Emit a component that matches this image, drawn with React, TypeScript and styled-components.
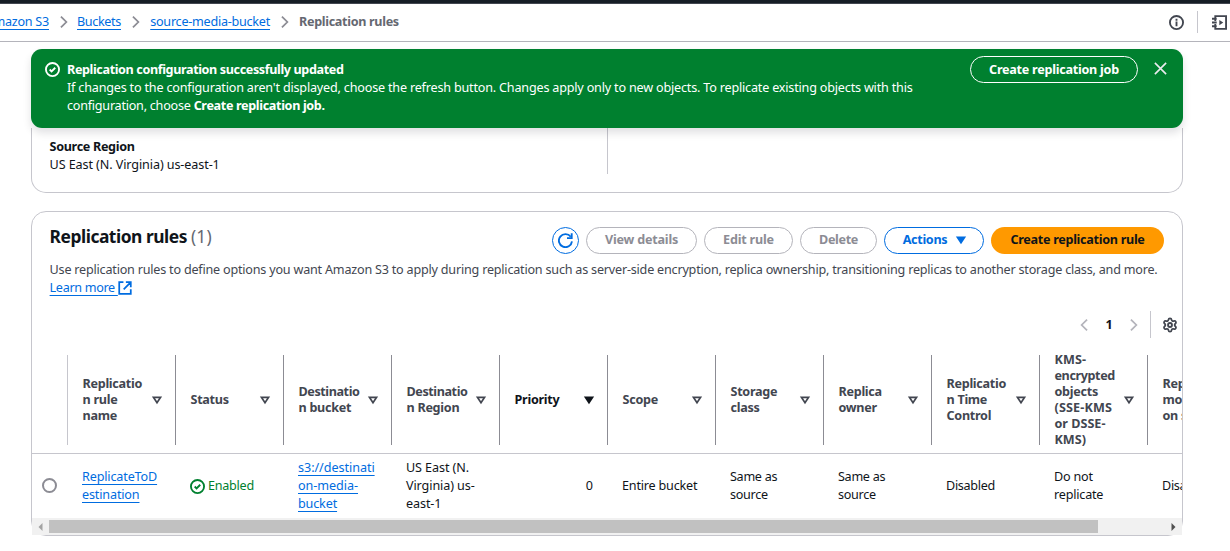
import React from "react";
import styled, { createGlobalStyle, css } from "styled-components";
import { Settings } from "lucide-react";

const Global = createGlobalStyle`
  * { box-sizing: border-box; }
  html, body { margin: 0; padding: 0; background: #fff; overflow: hidden; }
  body {
    font-family: "Noto Sans", "Open Sans", sans-serif;
    font-size: 12.6px;
    line-height: 18px;
    color: #0f141a;
  }
`;

const Page = styled.div`
  width: 1230px;
  height: 551px;
  display: flex;
  flex-direction: column;
  overflow: hidden;
`;

const TopStrip = styled.div`
  flex: none;
  height: 4px;
  background: #161d26;
  border-bottom: 1px solid #424650;
`;

const NavBar = styled.header`
  flex: none;
  height: 38px;
  display: flex;
  align-items: center;
  justify-content: space-between;
  border-bottom: 1px solid #b4b4bb;
`;

const Crumbs = styled.nav`
  display: flex;
  align-items: center;
  margin-left: -13px;
  padding-bottom: 1px;
`;

const Track = styled.span<{ $ls?: number }>`
  letter-spacing: ${(p) => p.$ls ?? -0.2}px;
  white-space: nowrap;
`;

const Link = styled.a<{ $ls?: number }>`
  color: #006ce0;
  white-space: pre;
  letter-spacing: ${(p) => p.$ls ?? -0.15}px;
  text-decoration: underline;
  text-decoration-thickness: 1px;
  text-underline-offset: 3px;
  text-decoration-skip-ink: none;
`;

const CrumbItem = styled.span<{ $w: number }>`
  width: ${(p) => p.$w}px;
  display: flex;
  align-items: center;
  justify-content: flex-end;
`;

const CrumbGap = styled.span`
  width: 29px;
  display: flex;
  justify-content: center;
`;

const Current = styled.span`
  font-weight: 700;
  color: #656871;
  white-space: nowrap;
  letter-spacing: -0.32px;
`;

const NavTools = styled.div`
  display: flex;
  align-items: center;
  padding: 0 3px 1px 0;
`;

const NavDivider = styled.span`
  width: 1px;
  height: 22px;
  background: #c6c6cd;
  margin: 0 14px 0 13px;
`;

const Svg = styled.svg<{ $size: number; $color: string }>`
  flex: none;
  display: block;
  width: ${(p) => p.$size}px;
  height: ${(p) => p.$size}px;
  fill: none;
  stroke: ${(p) => p.$color};
  stroke-width: 2;
`;

type IconProps = { size?: number; color?: string };

const ChevronRight = ({ size = 14, color = "#8c8c94" }: IconProps) => (
  <Svg $size={size} $color={color} viewBox="0 0 16 16"><path d="m4.5 1.8 6.2 6.2-6.2 6.2" /></Svg>
);
const ChevronLeft = ({ size = 14, color = "#b4b4bb" }: IconProps) => (
  <Svg $size={size} $color={color} viewBox="0 0 16 16"><path d="M11.5 1.8 5.3 8l6.2 6.2" /></Svg>
);
const CheckCircle = ({ size = 16, color = "#fff" }: IconProps) => (
  <Svg $size={size} $color={color} viewBox="0 0 16 16">
    <circle cx="8" cy="8" r="7" /><path d="m5 8 2 2 3.9-3.9" />
  </Svg>
);
const InfoIcon = () => (
  <Svg $size={15} $color="#424650" viewBox="0 0 16 16">
    <circle cx="8" cy="8" r="7" /><path d="M8 12V7M8 6V4" />
  </Svg>
);
const NotebookIcon = () => (
  <Svg $size={15} $color="#424650" viewBox="0 0 16 16">
    <path d="M3.5 3V1.2H15v13.6H3.5V13M3.5 5v1.4M3.5 9.6V11M0 4h5M0 8h5M0 12h5" />
    <path d="M7.8 5.2v5.6L12 8z" fill="#424650" stroke="none" />
  </Svg>
);
const CloseIcon = () => (
  <Svg $size={15} $color="#ebebf0" viewBox="0 0 16 16"><path d="m2 2 12 12M14 2 2 14" strokeWidth="1.7" /></Svg>
);
const RefreshIcon = () => (
  <Svg $size={15} $color="#006ce0" viewBox="0 0 16 16">
    <path d="M14.9 9A7 7 0 1 1 13.6 4" /><path d="M9.6 5.4h5V.2" />
  </Svg>
);
const ExternalIcon = () => (
  <Svg $size={14} $color="#006ce0" viewBox="0 0 16 16">
    <path d="M14.6 9.5v5.1H1.4V1.4h4.8M9 1.4h5.6V7M6.5 9.5l7.6-7.6" />
  </Svg>
);
const CaretFilled = ({ size = 14, color = "#0f141a" }: IconProps) => (
  <Svg $size={size} $color={color} viewBox="0 0 16 16"><path d="M4 5h8l-4 6z" fill={color} /></Svg>
);
const CaretOpen = () => (
  <Svg $size={14} $color="#424650" viewBox="0 0 16 16"><path d="M4 5h8l-4 6z" /></Svg>
);

const Main = styled.main`
  width: 1152px;
  margin: 7px 0 0 31px;
  display: flex;
  flex-direction: column;
`;

const Banner = styled.section`
  position: relative;
  z-index: 1;
  height: 79px;
  display: flex;
  align-items: flex-start;
  padding: 7px 15px 0 13.5px;
  border-radius: 11px;
  background: #00802f;
  color: #fff;
  box-shadow: 0 5px 8px rgba(0, 7, 22, 0.12);
`;

const BannerIcon = styled.span`
  padding-top: 6px;
  width: 22.5px;
`;

const BannerText = styled.div`
  flex: 1;
  padding-top: 5px;
  display: flex;
  flex-direction: column;
`;

const CloseButton = styled.button`
  border: 0;
  background: none;
  padding: 0;
  margin: 5px 0 0 15px;
`;

const Button = styled.button<{ $kind: "flash" | "disabled" | "normal" | "primary"; $w: number }>`
  flex: none;
  display: flex;
  align-items: center;
  justify-content: center;
  gap: 7px;
  width: ${(p) => p.$w}px;
  height: 27px;
  padding: 0 0 1px;
  border-radius: 14px;
  font: inherit;
  font-weight: 700;
  background: transparent;
  ${(p) => p.$kind === "flash" && css`border: 1px solid #fff; color: #fff; padding: 1px 0 0;`}
  ${(p) => p.$kind === "disabled" && css`border: 1px solid #b4b4bb; color: #8c8c94;`}
  ${(p) => p.$kind === "normal" && css`border: 1px solid #006ce0; color: #006ce0;`}
  ${(p) => p.$kind === "primary" && css`border: 0; background: #ff9900; color: #0f141a;`}
`;

const MenuButton = styled(Button)`
  padding-left: 3px;
`;

const SourcePanel = styled.section`
  height: 65px;
  display: grid;
  grid-template-columns: 575px 1fr;
  border: 1px solid #c6c6cd;
  border-top: 0;
  border-radius: 0 0 15px 15px;
`;

const SourceCell = styled.div`
  display: flex;
  flex-direction: column;
  padding: 10px 0 0 17.6px;
`;

const SourceDivider = styled.div`
  height: 46px;
  border-left: 1px solid #c6c6cd;
`;

const Strong = styled.b<{ $ls?: number }>`
  font-weight: 700;
  letter-spacing: ${(p) => p.$ls ?? -0.33}px;
`;

const RulesPanel = styled.section`
  margin-top: 18px;
  height: 325px;
  display: flex;
  flex-direction: column;
  border: 1px solid #c6c6cd;
  border-radius: 15px;
`;

const PanelHead = styled.div`
  flex: none;
  height: 42px;
  display: flex;
  align-items: flex-end;
  justify-content: space-between;
  padding: 0 18px 0 17.6px;
`;

const Title = styled.h2`
  margin: 0 0 6px;
  font-size: 17.4px;
  line-height: 24px;
  font-weight: 700;
  white-space: nowrap;
  letter-spacing: -0.47px;
`;

const Count = styled.span`
  font-weight: 400;
  color: #656871;
  letter-spacing: 0.1px;
`;

const Actions = styled.div`
  display: flex;
  gap: 7px;
`;

const Description = styled.div`
  flex: none;
  padding: 7px 17px 0 17.6px;
  color: #424650;
  height: 57px;
`;

const LearnLine = styled.div`
  display: flex;
  align-items: center;
  gap: 0.5px;
`;

const Paging = styled.div`
  flex: none;
  height: 27px;
  display: flex;
  align-items: center;
  justify-content: flex-end;
  padding-right: 4px;
`;

const PageNumber = styled.b`
  width: 36px;
  text-align: center;
`;

const PagingDivider = styled.span`
  width: 1px;
  height: 27px;
  margin: 0 11px 0 9px;
  background: #c6c6cd;
`;

const TableClip = styled.div`
  flex: none;
  height: 180px;
  overflow: hidden;
`;

const GridRow = styled.div<{ $head?: boolean }>`
  display: grid;
  grid-template-columns: 35px repeat(11, 108px);
  align-items: center;
  height: ${(p) => (p.$head ? 116 : 64)}px;
  padding-top: ${(p) => (p.$head ? 9 : 0)}px;
  border-bottom: ${(p) => (p.$head ? "1px solid #c6c6cd" : "0")};
`;

const HeadCell = styled.div<{ $first?: boolean; $active?: boolean }>`
  height: 90px;
  display: flex;
  align-items: center;
  justify-content: space-between;
  padding: 0 11px 0 14.5px;
  border-left: 1px solid ${(p) => (p.$first ? "#c6c6cd" : "#8c8c94")};
  color: ${(p) => (p.$active ? "#0f141a" : "#424650")};
  font-weight: 700;
  line-height: 16px;
`;

const Lines = styled.div`
  display: flex;
  flex-direction: column;
  align-items: flex-start;
`;

const Cell = styled.div<{ $end?: boolean; $tone?: string }>`
  display: flex;
  align-items: center;
  justify-content: ${(p) => (p.$end ? "flex-end" : "flex-start")};
  gap: 4px;
  padding: 0 14px 0 15px;
  color: ${(p) => p.$tone ?? "#0f141a"};
`;

const StatusCell = styled(Cell)`
  padding-left: 14.5px;
  gap: 3.5px;
`;

const RadioCell = styled.div`
  padding: 0 0 1px 9.5px;
`;

const Radio = styled.div`
  width: 15px;
  height: 15px;
  border: 2px solid #8c8c94;
  border-radius: 50%;
`;

const ScrollBar = styled.div`
  position: relative;
  flex: none;
  height: 17px;
  display: flex;
  align-items: center;
  background: #f1f1f1;
`;

const ScrollButton = styled.div`
  width: 17px;
  display: flex;
  justify-content: center;
`;

const Thumb = styled.div`
  width: 1049px;
  height: 13px;
  background: #c1c1c1;
`;

const Spacer = styled.div`
  flex: 1;
`;

type Line = string | [string, number];
type Column = { lines: Line[]; active?: boolean };

const columns: Column[] = [
  { lines: ["Replicatio", "n rule", "name"] },
  { lines: ["Status"] },
  { lines: [["Destinatio", -0.42], "n bucket"] },
  { lines: [["Destinatio", -0.42], "n Region"] },
  { lines: ["Priority"], active: true },
  { lines: ["Scope"] },
  { lines: ["Storage", "class"] },
  { lines: ["Replica", "owner"] },
  { lines: ["Replicatio", "n Time", "Control"] },
  { lines: [["KMS-", 0.1], ["encrypted", -0.4], "objects", ["(SSE-KMS", 0.15], ["or DSSE-", 0], ["KMS)", 0]] },
  { lines: ["Replica", "modification", "on sync"] },
];

const TextLines = ({ lines, ls }: { lines: Line[]; ls?: number }) => (
  <Lines>
    {lines.map((line) => {
      const [text, own] = typeof line === "string" ? [line, ls] : line;
      return <Track key={text} $ls={own}>{text}</Track>;
    })}
  </Lines>
);

export default function App() {
  return (
    <Page>
      <Global />
      <TopStrip />
      <NavBar>
        <Crumbs>
          <CrumbItem $w={62}><Link $ls={-0.25}>Amazon S3</Link></CrumbItem>
          <CrumbGap><ChevronRight /></CrumbGap>
          <CrumbItem $w={43}><Link $ls={-0.35}>Buckets</Link></CrumbItem>
          <CrumbGap><ChevronRight /></CrumbGap>
          <CrumbItem $w={120}><Link $ls={-0.25}>source-media-bucket</Link></CrumbItem>
          <CrumbGap><ChevronRight /></CrumbGap>
          <Current>Replication rules</Current>
        </Crumbs>
        <NavTools>
          <InfoIcon />
          <NavDivider />
          <NotebookIcon />
        </NavTools>
      </NavBar>
      <Main>
        <Banner>
          <BannerIcon><CheckCircle size={15} /></BannerIcon>
          <BannerText>
            <Strong $ls={-0.38}>Replication configuration successfully updated</Strong>
            <Track $ls={-0.19}>If changes to the configuration aren't displayed, choose the refresh button. Changes apply only to new objects. To replicate existing objects with this</Track>
            <Track $ls={-0.24}>configuration, choose <Strong $ls={-0.34}>Create replication job.</Strong></Track>
          </BannerText>
          <Button $kind="flash" $w={168}><Track $ls={-0.25}>Create replication job</Track></Button>
          <CloseButton aria-label="Close"><CloseIcon /></CloseButton>
        </Banner>
        <SourcePanel>
          <SourceCell>
            <Strong>Source Region</Strong>
            <Track $ls={-0.1}>US East (N. Virginia) us-east-1</Track>
          </SourceCell>
          <SourceDivider />
        </SourcePanel>
        <RulesPanel>
          <PanelHead>
            <Title>Replication rules <Count>(1)</Count></Title>
            <Actions>
              <Button $kind="normal" $w={27} aria-label="Refresh"><RefreshIcon /></Button>
              <Button $kind="disabled" $w={111}><Track>View details</Track></Button>
              <Button $kind="disabled" $w={89}><Track>Edit rule</Track></Button>
              <Button $kind="disabled" $w={77}><Track $ls={-0.35}>Delete</Track></Button>
              <MenuButton $kind="normal" $w={100}><Track $ls={-0.3}>Actions</Track><CaretFilled color="#006ce0" /></MenuButton>
              <Button $kind="primary" $w={173}><Track $ls={-0.29}>Create replication rule</Track></Button>
            </Actions>
          </PanelHead>
          <Description>
            <Track $ls={-0.21}>Use replication rules to define options you want Amazon S3 to apply during replication such as server-side encryption, replica ownership, transitioning replicas to another storage class, and more.</Track>
            <LearnLine><Link $ls={-0.32}>{"Learn more "}</Link><ExternalIcon /></LearnLine>
          </Description>
          <Paging>
            <ChevronLeft />
            <PageNumber>1</PageNumber>
            <ChevronRight color="#b4b4bb" />
            <PagingDivider />
            <Settings size={16} strokeWidth={2.7} color="#424650" />
          </Paging>
          <TableClip>
            <GridRow $head>
              <div />
              {columns.map((c, i) => (
                <HeadCell key={i} $first={i === 0} $active={c.active}>
                  <TextLines lines={c.lines} ls={-0.28} />
                  {c.active ? <CaretFilled /> : <CaretOpen />}
                </HeadCell>
              ))}
            </GridRow>
            <GridRow>
              <RadioCell><Radio /></RadioCell>
              <Cell><Lines><Link>ReplicateToD</Link><Link>estination</Link></Lines></Cell>
              <StatusCell $tone="#00802f"><CheckCircle size={15} color="#00802f" /><Track $ls={-0.25}>Enabled</Track></StatusCell>
              <Cell><Lines><Link $ls={-0.05}>s3://destinati</Link><Link $ls={-0.05}>on-media-</Link><Link>bucket</Link></Lines></Cell>
              <Cell><TextLines lines={["US East (N.", "Virginia) us-", "east-1"]} ls={-0.1} /></Cell>
              <Cell $end><Track $ls={0}>0</Track></Cell>
              <Cell><Track>Entire bucket</Track></Cell>
              <Cell><TextLines lines={["Same as", "source"]} ls={-0.3} /></Cell>
              <Cell><TextLines lines={["Same as", "source"]} ls={-0.3} /></Cell>
              <Cell><Track $ls={-0.3}>Disabled</Track></Cell>
              <Cell><TextLines lines={["Do not", "replicate"]} /></Cell>
              <Cell><Track $ls={-0.3}>Disabled</Track></Cell>
            </GridRow>
          </TableClip>
          <ScrollBar>
            <ScrollButton><svg width="5" height="8" viewBox="0 0 5 8"><path d="M4.5 0v8L0.5 4z" fill="#a3a3a3" /></svg></ScrollButton>
            <Thumb />
            <Spacer />
            <ScrollButton><svg width="5" height="8" viewBox="0 0 5 8"><path d="M.5 0v8L4.5 4z" fill="#505050" /></svg></ScrollButton>
          </ScrollBar>
        </RulesPanel>
      </Main>
    </Page>
  );
}
